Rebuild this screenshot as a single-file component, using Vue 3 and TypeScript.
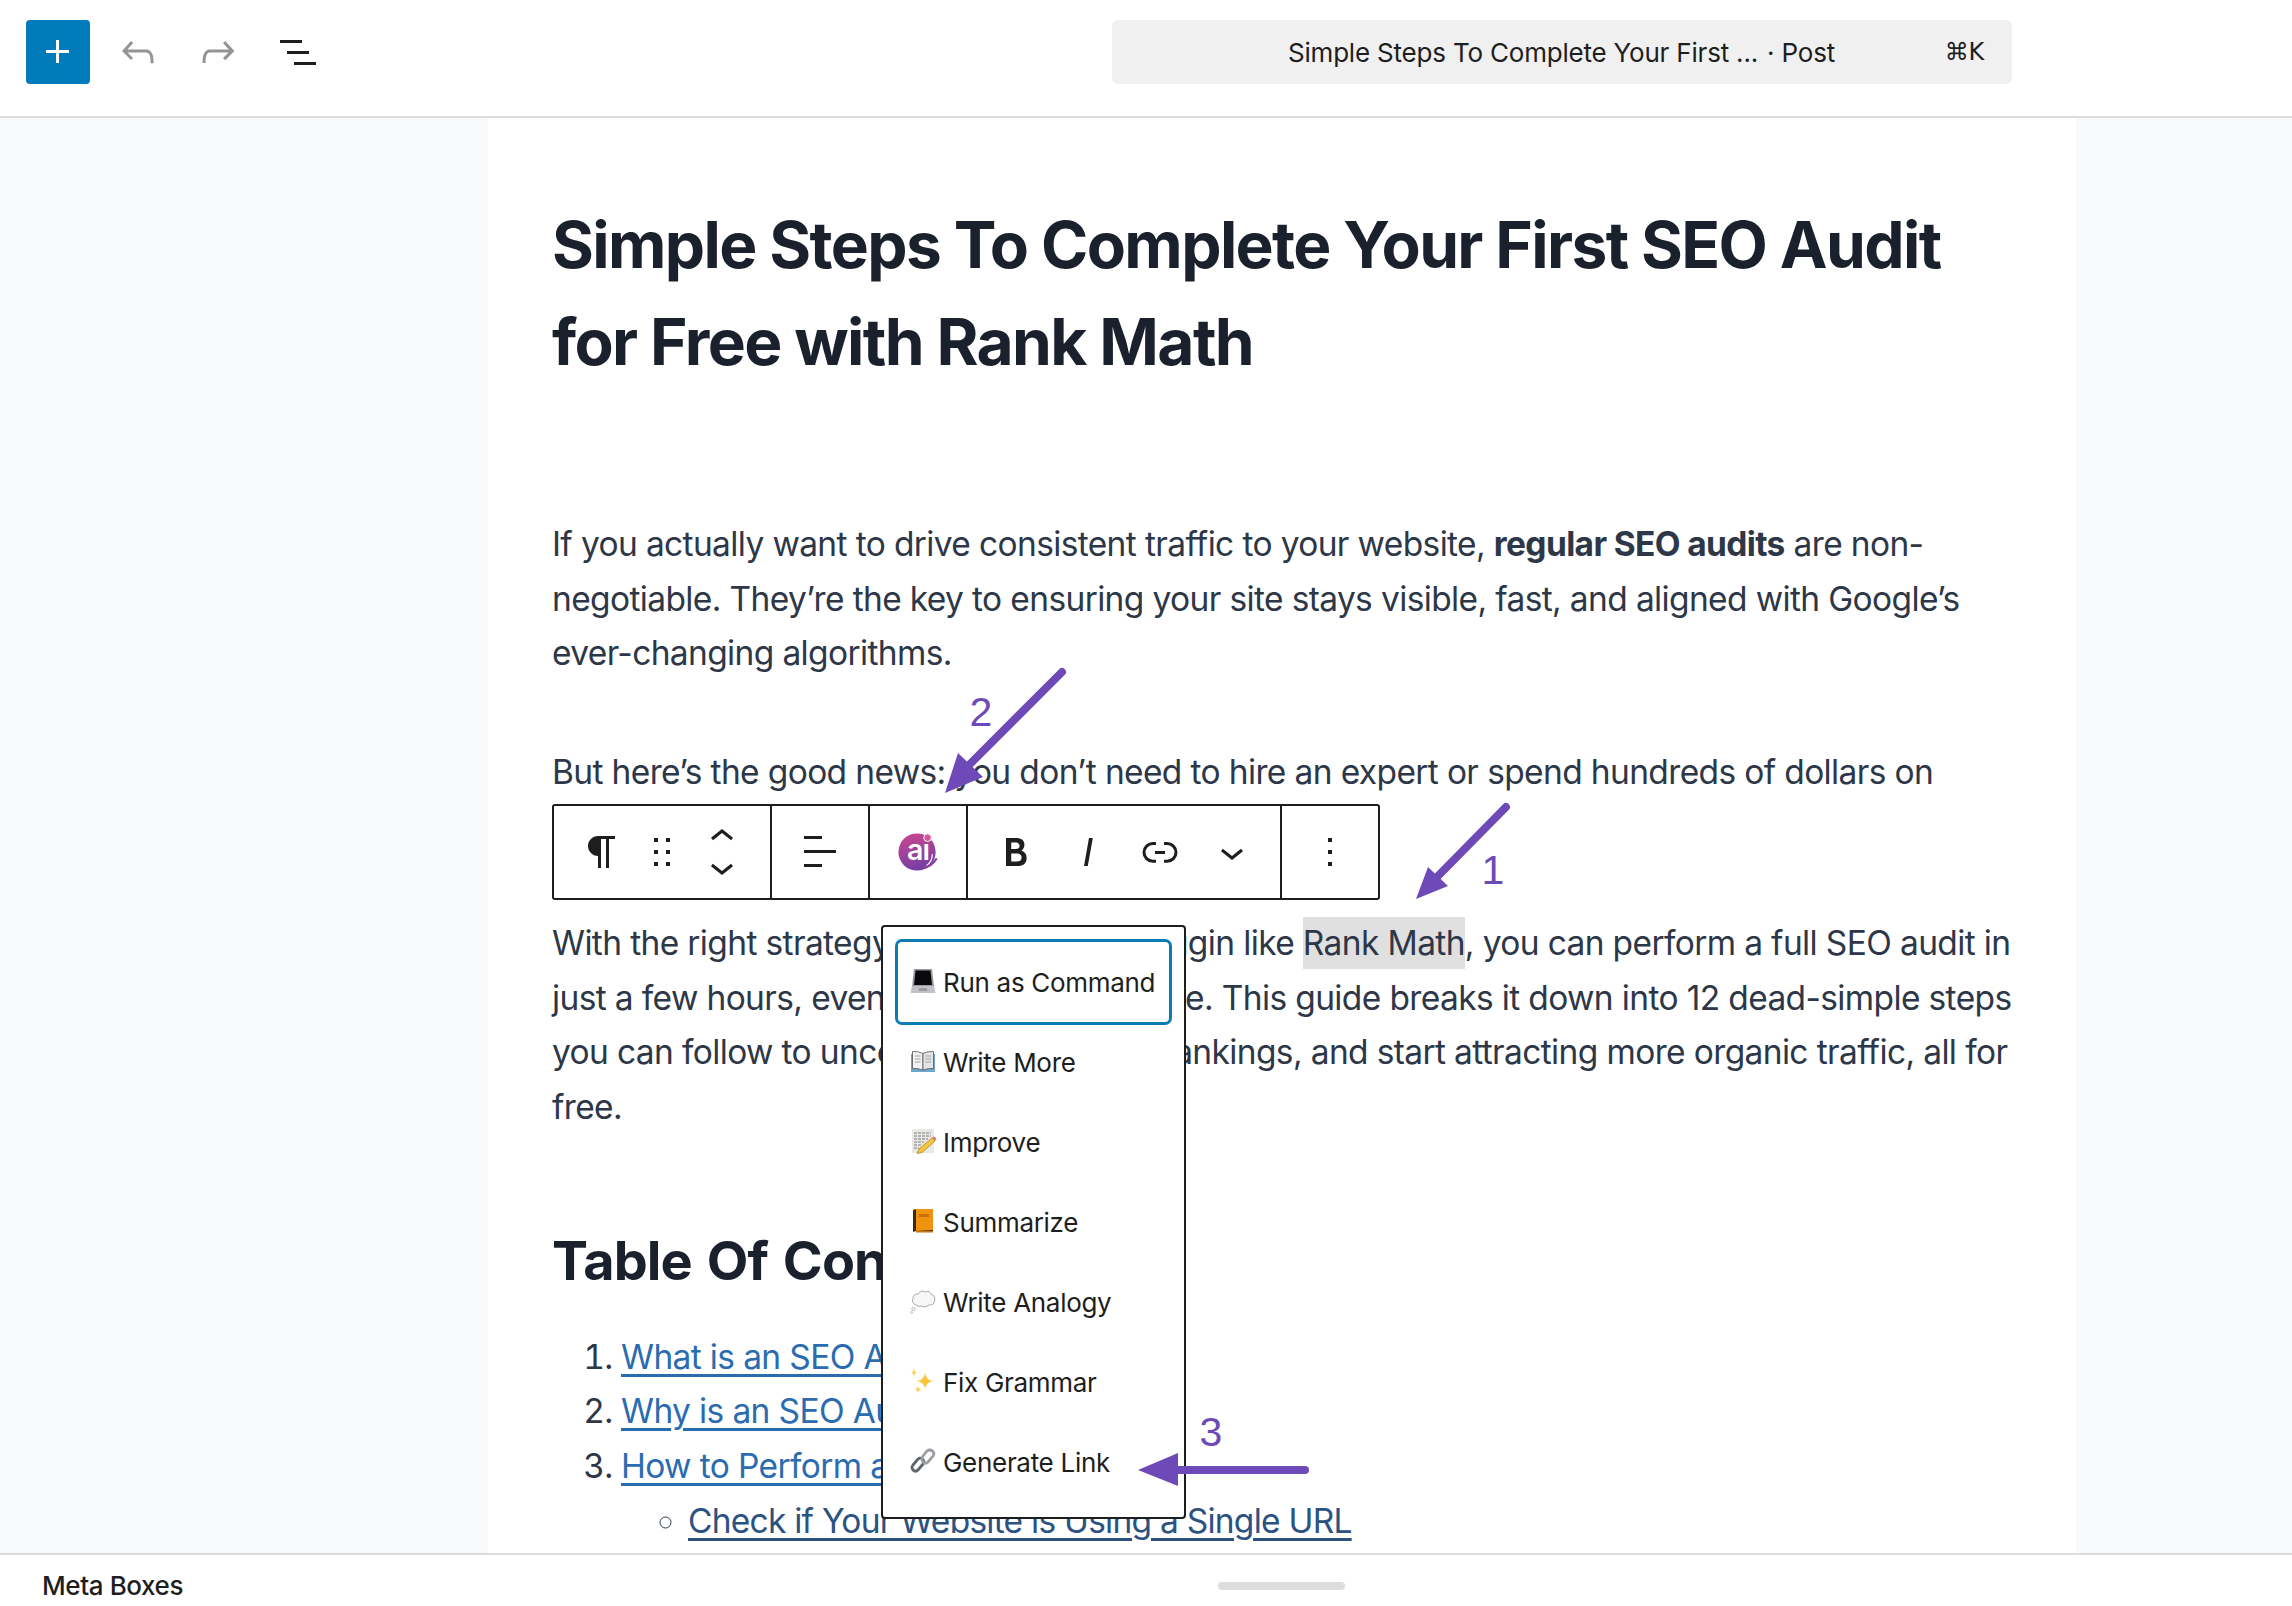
<template>
  <div class="page">
    <!-- Top bar -->
    <header class="topbar">
      <div class="tools">
        <button class="add-btn">
          <svg class="ico" viewBox="0 0 24 24"><path d="M11 12.500V17.500H12.500V12.500H17.500V11H12.500V6H11V11H6V12.500H11Z" fill="#fff" /></svg>
        </button>
        <svg class="ico muted" viewBox="0 0 24 24"><path :d="icons.undo" /></svg>
        <svg class="ico muted" viewBox="0 0 24 24"><path :d="icons.redo" /></svg>
        <svg class="ico" viewBox="0 0 24 24"><path :d="icons.listView" /></svg>
      </div>
      <div class="command">
        <span class="command-title">Simple Steps To Complete Your First ... <span class="command-kind">· Post</span></span>
        <span class="command-key">⌘K</span>
      </div>
    </header>

    <!-- Editor canvas -->
    <main class="canvas">
      <article class="paper">
        <h1>Simple Steps To Complete Your First SEO Audit for Free with Rank Math</h1>
        <p class="p-first">
          If you actually want to drive consistent traffic to your website, <strong>regular SEO audits</strong> are non-negotiable. They’re the key to ensuring your site stays visible, fast, and aligned with Google’s ever-changing algorithms.
        </p>
        <p class="p-news">But here’s the good news: you don’t need to hire an expert or spend hundreds of dollars on</p>
        <p>
          With the right strategy and a free &thinsp;SEO plugin like <mark>Rank Math</mark>, you can perform a full SEO audit in just a few hours, even with little knowledge. This guide breaks it down into 12 dead-simple steps you can follow to uncover issues, boost rankings, and start attracting more organic traffic, all for free.
        </p>
        <h2>Table Of Contents</h2>
        <ol>
          <li><a href="#">What is an SEO Audit?</a></li>
          <li><a href="#">Why is an SEO Audit Important?</a></li>
          <li>
            <a href="#">How to Perform a Free SEO Audit</a>
            <ul>
              <li><a href="#">Check if Your Website is Using a Single URL</a></li>
            </ul>
          </li>
        </ol>
      </article>
    </main>

    <footer class="metabar">
      <span class="meta-label">Meta Boxes</span>
      <span class="handle"></span>
    </footer>

    <!-- Block toolbar -->
    <div class="block-toolbar">
      <div class="group group-first">
        <svg class="ico" viewBox="0 0 24 24"><path :d="icons.paragraph" /></svg>
        <svg class="ico" viewBox="0 0 24 24"><path :d="icons.drag" /></svg>
        <div class="movers">
          <svg class="ico" viewBox="0 0 24 24"><path :d="icons.chevronUp" /></svg>
          <svg class="ico" viewBox="0 0 24 24"><path :d="icons.chevronDown" /></svg>
        </div>
      </div>
      <div class="group group-one">
        <svg class="ico" viewBox="0 0 24 24"><path :d="icons.align" /></svg>
      </div>
      <div class="group group-one">
        <svg class="ai-logo" viewBox="0 0 44 44">
          <defs>
            <linearGradient id="aiGrad" x1="0.3" y1="0" x2="0.6" y2="1">
              <stop offset="0" stop-color="#c9468f" />
              <stop offset="1" stop-color="#6f3fa6" />
            </linearGradient>
          </defs>
          <circle cx="21" cy="22" r="19.500" fill="url(#aiGrad)" />
          <path d="M28 38.500Q36 37 41 29.500" fill="none" stroke="#8a3f9f" stroke-width="2.500" stroke-linecap="round" />
          <path d="M37 24Q37 32 31 36" fill="none" stroke="#fff" stroke-width="1.200" />
          <text x="22" y="30" class="ai-text">aı</text>
          <circle cx="32" cy="7" r="4" fill="#d9559b" stroke="#fff" stroke-width="1" />
        </svg>
      </div>
      <div class="group group-format">
        <svg class="ico" viewBox="0 0 24 24"><path :d="icons.bold" /></svg>
        <svg class="ico" viewBox="0 0 24 24"><path :d="icons.italic" /></svg>
        <svg class="ico" viewBox="0 0 24 24"><path :d="icons.link" /></svg>
        <svg class="ico" viewBox="0 0 24 24"><path :d="icons.chevronDown" /></svg>
      </div>
      <div class="group group-one group-last">
        <svg class="ico" viewBox="0 0 24 24"><path :d="icons.more" /></svg>
      </div>
    </div>

    <!-- AI dropdown -->
    <div class="menu">
      <div v-for="(item, i) in menuItems" :key="item.label" class="menu-item" :class="{ focused: i === 0 }">
        <svg class="emoji" viewBox="0 0 26 26">
          <template v-if="item.icon === 'laptop'">
            <path d="M4 1H22L24 18H2Z" fill="#9a9a9e" />
            <path d="M5.500 2.500H20.500L22 17H4Z" fill="#0a0a0c" />
            <path d="M2 18H24L25.500 25H.5Z" fill="#c2c2c6" />
            <path d="M9 20H17L17.500 23H8.500Z" fill="#9b9ba0" />
          </template>
          <template v-else-if="item.icon === 'book'">
            <path d="M1 6H25V24H1Z" fill="#6fa6cc" />
            <path d="M2.500 3.500Q8 3 13 5.500V22Q8 20 2.500 20.500Z" fill="#f1f1f1" stroke="#555" stroke-width=".8" />
            <path d="M23.500 3.500Q18 3 13 5.500V22Q18 20 23.500 20.500Z" fill="#e4e4e4" stroke="#555" stroke-width=".8" />
            <path d="M5 8H10.500M5 11H10.500M5 14H10.500M15.500 8H21M15.500 11H21M15.500 14H21" stroke="#9a9a9a" stroke-width=".9" />
          </template>
          <template v-else-if="item.icon === 'memo'">
            <path d="M2 1H24V25H2Z" fill="#e8e8e6" />
            <path d="M4 5H21M4 8H21M4 11H18M4 14H14M4 17H11M4 20H9" stroke="#7d7d7d" stroke-width="1" stroke-dasharray="3 1" />
            <path d="M22 10L25 13L12 24.500L7 25.500L9 21Z" fill="#f4c63d" stroke="#a57d12" stroke-width=".7" />
            <path d="M22 10L23.500 8.500Q25 8 26 10Q26.500 11.500 25 13Z" fill="#e77c7c" />
          </template>
          <template v-else-if="item.icon === 'orange-book'">
            <path d="M3 2L6 1H23V23H6L3 24Z" fill="#3c2a12" />
            <path d="M6 1H23V22L6 23Z" fill="#f0930f" />
            <path d="M9 6H19V9H9Z" fill="#c76f08" />
            <path d="M6 23H23V24.500H6Z" fill="#c4740e" />
          </template>
          <template v-else-if="item.icon === 'bubble'">
            <path d="M6 17Q1 15 3 10.500Q3 6 8 6Q11 1.500 15 4Q20 2 21.500 6.500Q26 8 24.500 13Q24 17.500 19 17Q15 20.500 11 18Q8 19 6 17Z" fill="#f7f7f7" stroke="#a8a8a8" stroke-width="1" />
            <circle cx="3.500" cy="21" r="1.700" fill="#f5f5f5" stroke="#a8a8a8" stroke-width=".7" />
            <circle cx="1.500" cy="24.500" r="1" fill="#f5f5f5" stroke="#a8a8a8" stroke-width=".6" />
          </template>
          <template v-else-if="item.icon === 'sparkles'">
            <path d="M15 5Q16 12 23 13Q16 14 15 21Q14 14 7 13Q14 12 15 5Z" fill="#fbc537" />
            <path d="M4 0Q4.500 4 7 4.500Q4.500 5 4 9Q3.500 5 1 4.500Q3.500 4 4 0Z" fill="#fbd35e" />
            <path d="M8 18Q8.500 21 11 21.500Q8.500 22 8 25.500Q7.500 22 5 21.500Q7.500 21 8 18Z" fill="#fbd35e" />
          </template>
          <template v-else>
            <g fill="none">
              <path d="M3 17L8 11Q10.500 9 13 11.500Q15 14 13 16L8 22Q5.500 24.500 3 22Q1 19.500 3 17Z" stroke="#5f6469" stroke-width="2.800" />
              <path d="M13 8L17 3Q19.500 1 22.500 3Q25 5.500 23 8L18 14Q15.500 16.500 13 14Q11 11 13 8Z" stroke="#9a9fa4" stroke-width="2.800" />
            </g>
          </template>
        </svg>
        <span>{{ item.label }}</span>
      </div>
    </div>

    <!-- Purple annotations -->
    <svg class="notes" viewBox="0 0 2292 1606">
      <g fill="#6e4ab8" stroke="#6e4ab8">
        <path d="M1062 672L968 766" stroke-width="8" stroke-linecap="round" fill="none" />
        <path d="M945 793L958 753L983 777Z" stroke="none" />
        <path d="M1506 807L1436 878" stroke-width="8" stroke-linecap="round" fill="none" />
        <path d="M1416 899L1428 867L1448 886Z" stroke="none" />
        <path d="M1305 1470H1170" stroke-width="8" stroke-linecap="round" fill="none" />
        <path d="M1138 1470L1178 1453V1486Z" stroke="none" />
      </g>
      <text x="981" y="726" class="note-num">2</text>
      <text x="1493" y="884" class="note-num">1</text>
      <text x="1211" y="1446" class="note-num">3</text>
    </svg>
  </div>
</template>

<script setup lang="ts">
interface MenuItem {
  label: string;
  icon: string;
}

const icons = {
  undo: "M18.300 11.700c-.6-.6-1.400-.9-2.300-.9H6.700l2.900-3.300-1.100-1-4.500 5L8.500 16l1-1-2.700-2.700H16c.5 0 .9.2 1.300.5 1 1 1 3.400 1 4.500v.3h1.500v-.2c0-1.500 0-4.300-1.500-5.700z",
  redo: "M15.600 6.500l-1.100 1 2.900 3.300H8c-.9 0-1.700.3-2.300.9-1.400 1.500-1.400 4.200-1.400 5.600v.2h1.500v-.3c0-1.100 0-3.500 1-4.500.3-.3.7-.5 1.300-.5h9.200L14.500 15l1.100 1.100 4.600-4.600-4.600-5z",
  listView: "M3 6h11v1.500H3V6Zm3.500 5.500h11V13h-11v-1.500ZM21 17H10v1.500h11V17Z",
  paragraph: "m9.996 14v-.225l.004.000v6.225h1.500v-14.500h2.500v14.500h1.500v-14.500h3v-1.500h-8.504c-2.761 0-5 2.239-5 5 0 2.761 2.239 5 5 5z",
  drag: "M8 7h2V5H8v2zm0 6h2v-2H8v2zm0 6h2v-2H8v2zm6-14v2h2V5h-2zm0 8h2v-2h-2v2zm0 6h2v-2h-2v2z",
  chevronUp: "M6.500 12.400L12 8l5.500 4.400-.9 1.200L12 10l-4.500 3.600-1-1.200z",
  chevronDown: "M17.500 11.600L12 16l-5.500-4.400.9-1.200L12 14l4.500-3.600 1 1.200z",
  align: "M13 5.500H4V4h9v1.500Zm7 7H4V11h16v1.500Zm-7 7H4V18h9v1.500Z",
  bold: "M14.700 11.300c1-.6 1.500-1.600 1.500-3 0-2.300-1.700-3.300-4.300-3.300H7v14h5.800c1.400 0 2.500-.3 3.300-1 .8-.7 1.200-1.700 1.200-2.900.1-1.900-.8-3.100-2.600-3.800zm-5.100-4h2.300c.6 0 1.100.1 1.400.4.3.3.5.7.5 1.200s-.2 1-.5 1.200c-.3.3-.8.4-1.400.4H9.600V7.300zm4.600 9c-.4.3-1 .4-1.700.4H9.600v-3.900h2.900c.7 0 1.300.2 1.700.6.4.4.6.8.6 1.400 0 .6-.2 1.100-.6 1.500z",
  italic: "M12.500 5L10 19h1.900l2.500-14z",
  link: "M10 17.389H8.444A5.194 5.194 0 1 1 8.444 7H10v1.500H8.444a3.694 3.694 0 0 0 0 7.389H10v1.500ZM14 7h1.556a5.194 5.194 0 0 1 0 10.390H14v-1.500h1.556a3.694 3.694 0 0 0 0-7.390H14V7Zm-4.500 6h5v-1.500h-5V13Z",
  more: "M13 19h-2v-2h2v2zm0-6h-2v-2h2v2zm0-6h-2V5h2v2z",
};

const menuItems: MenuItem[] = [
  { label: "Run as Command", icon: "laptop" },
  { label: "Write More", icon: "book" },
  { label: "Improve", icon: "memo" },
  { label: "Summarize", icon: "orange-book" },
  { label: "Write Analogy", icon: "bubble" },
  { label: "Fix Grammar", icon: "sparkles" },
  { label: "Generate Link", icon: "link" },
];
</script>

<style>
html,
body {
  margin: 0;
  background: #fff;
}
</style>

<style scoped>
.page {
  position: relative;
  width: 2292px;
  height: 1606px;
  display: flex;
  flex-direction: column;
  overflow: hidden;
  font-family: Inter, "Liberation Sans", sans-serif;
  color: #1e1e1e;
}

.ico {
  display: block;
  width: 48px;
  height: 48px;
  fill: #1e1e1e;
  flex: none;
}

.ico.muted {
  fill: #949494;
}

/* top bar */
.topbar {
  flex: none;
  height: 118px;
  box-sizing: border-box;
  padding-top: 20px;
  border-bottom: 2px solid #dcdcde;
  background: #fff;
  display: flex;
  align-items: flex-start;
}

.tools {
  display: flex;
  align-items: center;
  gap: 32px;
  width: 1112px;
  padding-left: 26px;
  box-sizing: border-box;
}

.add-btn {
  width: 64px;
  height: 64px;
  border: 0;
  padding: 8px;
  border-radius: 4px;
  background: #007cba;
}

.add-btn + .ico {
  margin-left: -8px;
}

.command {
  width: 900px;
  height: 64px;
  box-sizing: border-box;
  background: #f0f0f0;
  border-radius: 6px;
  display: flex;
  align-items: center;
  font-size: 26px;
  letter-spacing: -0.2px;
  padding-left: 176px;
}

.command-title {
  white-space: nowrap;
}

.command-kind {
  margin-left: 2px;
}

.command-key {
  margin-left: auto;
  padding-right: 28px;
  font-family: "DejaVu Sans", sans-serif;
  font-size: 24px;
}

/* canvas */
.canvas {
  flex: 1;
  min-height: 0;
  overflow: hidden;
  background: #f8f9fa;
  padding-left: 488px;
}

.paper {
  width: 1588px;
  height: 100%;
  box-sizing: border-box;
  background: #fff;
  padding: 79px 64px 0;
  font-size: 33.500px;
  letter-spacing: -0.63px;
  line-height: 54.700px;
  color: #2d3748;
}

h1 {
  margin: 0 0 127px;
  font-size: 64px;
  letter-spacing: -1.620px;
  line-height: 96.500px;
  font-weight: 700;
  color: #1a202c;
}

p {
  margin: 0;
}

.p-first {
  margin-bottom: 64px;
}

.p-news {
  margin-bottom: 116px;
}

mark {
  background: #e0e0e0;
  color: inherit;
  padding: 6px 0;
}

h2 {
  margin: 90px 0 33px;
  font-size: 54px;
  letter-spacing: -0.9px;
  word-spacing: 3px;
  line-height: 72px;
  font-weight: 700;
  color: #1a202c;
}

ol,
ul {
  margin: 0;
  padding: 0 0 0 69px;
}

ul {
  padding-left: 67px;
  list-style: circle;
}

a {
  color: #2b6cb0;
  text-decoration: underline;
  text-decoration-thickness: 3px;
  text-underline-offset: 5px;
}

ul a {
  color: #2c5282;
  letter-spacing: -0.75px;
}

/* bottom bar */
.metabar {
  flex: none;
  height: 53px;
  padding-top: 10px;
  background: #fff;
  border-top: 2px solid #dcdcde;
  box-sizing: border-box;
  display: grid;
  grid-template-columns: 1218px 127px;
  align-items: center;
}

.meta-label {
  padding-left: 42px;
  font-size: 26px;
  letter-spacing: -0.4px;
  font-weight: 500;
  color: #1e1e1e;
}

.handle {
  height: 8px;
  border-radius: 4px;
  background: #dddddd;
}

/* block toolbar */
.block-toolbar {
  position: absolute;
  left: 552px;
  top: 804px;
  width: 828px;
  height: 96px;
  box-sizing: border-box;
  display: flex;
  background: #fff;
  border: 2px solid #1e1e1e;
  border-radius: 3px;
}

.group {
  display: flex;
  align-items: center;
  border-right: 2px solid #1e1e1e;
  box-sizing: border-box;
}

.group-first {
  width: 218px;
  padding-left: 24px;
  gap: 12px;
}

.movers {
  display: flex;
  flex-direction: column;
}

.movers .ico {
  margin: -9px 0;
}

.group-one {
  width: 98px;
  justify-content: center;
}

.group-format {
  width: 314px;
  padding-left: 24px;
  gap: 24px;
}

.group-last {
  border-right: 0;
  flex: 1;
}

.ai-logo {
  width: 42px;
  height: 42px;
}

.ai-text {
  font-family: Inter, sans-serif;
  font-size: 30px;
  font-weight: 600;
  letter-spacing: -1px;
  fill: #fff;
  text-anchor: middle;
}

/* menu */
.menu {
  position: absolute;
  left: 881px;
  top: 925px;
  width: 305px;
  box-sizing: border-box;
  padding: 15px;
  background: #fff;
  border: 2px solid #1e1e1e;
  border-radius: 4px;
}

.menu-item {
  height: 80px;
  display: flex;
  align-items: center;
  gap: 7px;
  padding-left: 12px;
  font-size: 26px;
  letter-spacing: -0.3px;
  white-space: nowrap;
  color: #1e1e1e;
}

.menu-item.focused {
  outline: 3px solid #0a7cb4;
  border-radius: 4px;
}

.emoji {
  width: 26px;
  height: 26px;
  flex: none;
  margin-top: -2px;
}

/* annotations */
.notes {
  position: absolute;
  left: 0;
  top: 0;
  width: 2292px;
  height: 1606px;
  pointer-events: none;
}

.note-num {
  font-family: "Liberation Sans", sans-serif;
  font-size: 41px;
  fill: #6e4ab8;
  text-anchor: middle;
}
</style>
